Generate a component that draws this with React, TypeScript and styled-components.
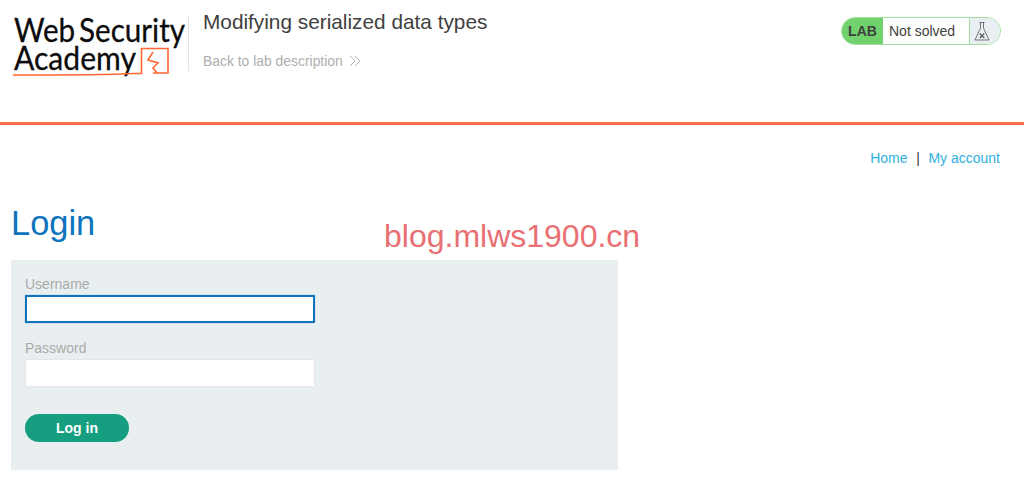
import styled, { createGlobalStyle } from 'styled-components';

const GlobalStyle = createGlobalStyle`
  html,
  body {
    margin: 0;
    padding: 0;
    background: #fff;
    font-family: 'Liberation Sans', Arial, sans-serif;
  }
`;

function Logo() {
  return (
    <LogoSvg viewBox='0 0 176 64' aria-label='Web Security Academy'>
      <LogoText x='2' y='27' textLength='171' lengthAdjust='spacingAndGlyphs'>
        Web Security
      </LogoText>
      <LogoText x='2' y='55' textLength='122' lengthAdjust='spacingAndGlyphs'>
        Academy
      </LogoText>
      <path d='M1 60C40 60 90 60 122 58.5H129.5V33.5H156V58H141' fill='none' stroke='#ff6633' strokeWidth='1.6' />
      <path d='M141 37L136 45L146 48L141 53L145 58' fill='none' stroke='#ff6633' strokeWidth='1.6' />
    </LogoSvg>
  );
}

function FlaskIcon() {
  return (
    <svg width='16' height='21' viewBox='0 0 16 21' fill='none' stroke='#555' strokeWidth='0.8'>
      <path d='M5.5 1.5H10.5M6.5 1.5V7L1 19H15L9.5 7V1.5' />
      <path d='M5.7 12.5L10.3 17M10.3 12.5L5.7 17' strokeWidth='1.1' />
    </svg>
  );
}

export default function App() {
  return (
    <Page>
      <GlobalStyle />
      <Header>
        <LogoLink href='#'>
          <Logo />
        </LogoLink>
        <TitleBlock>
          <Title>Modifying serialized data types</Title>
          <BackLink href='#'>
            Back to lab description
            <svg width='12' height='12' viewBox='0 0 12 12' fill='none' stroke='#b3b3b3' strokeWidth='1'>
              <path d='M1 1L6 6L1 11M6 1L11 6L6 11' />
            </svg>
          </BackLink>
        </TitleBlock>
        <StatusBadge>
          <LabTag>LAB</LabTag>
          <StatusText>Not solved</StatusText>
          <FlaskCell>
            <FlaskIcon />
          </FlaskCell>
        </StatusBadge>
      </Header>
      <Nav>
        <NavLink href='#'>Home</NavLink>
        <NavDivider>|</NavDivider>
        <NavLink href='#'>My account</NavLink>
      </Nav>
      <Main>
        <Heading>Login</Heading>
        <LoginForm onSubmit={(e) => e.preventDefault()}>
          <FieldLabel htmlFor='username'>Username</FieldLabel>
          <TextInput id='username' type='text' autoFocus />
          <FieldLabel htmlFor='password'>Password</FieldLabel>
          <TextInput id='password' type='password' />
          <SubmitButton type='submit'>Log in</SubmitButton>
        </LoginForm>
      </Main>
      <Watermark>blog.mlws1900.cn</Watermark>
    </Page>
  );
}

const Page = styled.div`
  position: relative;
  width: 1024px;
  height: 477px;
  overflow: hidden;
`;

const Header = styled.header`
  box-sizing: border-box;
  display: flex;
  align-items: flex-start;
  height: 125px;
  padding: 15px 23px 0 12px;
  border-bottom: 3px solid #f8704a;
`;

const LogoLink = styled.a`
  display: block;
  flex: none;
  width: 176px;
  height: 64px;
`;

const LogoSvg = styled.svg`
  display: block;
  width: 176px;
  height: 64px;
`;

const LogoText = styled.text`
  font-family: Lato, sans-serif;
  font-size: 33px;
  word-spacing: -4px;
  fill: #0b0b0b;
  stroke: #0b0b0b;
  stroke-width: 0.3px;
`;

const TitleBlock = styled.div`
  display: flex;
  flex-direction: column;
  align-items: flex-start;
  flex: 1;
  height: 56px;
  padding-left: 14px;
  border-left: 1px solid #e6e6e6;
`;

const Title = styled.h2`
  margin: -7px 0 0;
  font-size: 20.8px;
  line-height: 27px;
  font-weight: 400;
  color: #404040;
`;

const BackLink = styled.a`
  display: flex;
  align-items: center;
  gap: 6px;
  margin-top: 16px;
  font-size: 13.9px;
  line-height: 20px;
  color: #aeaeae;
  text-decoration: none;
`;

const StatusBadge = styled.div`
  box-sizing: border-box;
  display: flex;
  align-items: stretch;
  flex: none;
  width: 160px;
  height: 28px;
  margin-top: 2px;
  border: 1px solid #9ee09b;
  border-radius: 15px;
  overflow: hidden;
  background: #fff;
`;

const LabTag = styled.div`
  display: flex;
  align-items: center;
  justify-content: center;
  width: 41px;
  background: #70d16d;
  font-size: 14px;
  font-weight: 700;
  color: #404040;
`;

const StatusText = styled.div`
  display: flex;
  align-items: center;
  flex: 1;
  padding-left: 6px;
  font-size: 14px;
  color: #404040;
`;

const FlaskCell = styled.div`
  box-sizing: border-box;
  display: flex;
  align-items: center;
  width: 31px;
  padding-left: 4px;
  border-left: 1px solid #9ee09b;
  background: #e8eef1;
`;

const Nav = styled.nav`
  display: flex;
  justify-content: flex-end;
  align-items: center;
  gap: 8.6px;
  height: 20px;
  margin-top: 23px;
  padding-right: 24px;
  font-size: 14px;
`;

const NavLink = styled.a`
  color: #2fb0e0;
  text-decoration: none;
`;

const NavDivider = styled.span`
  color: #404040;
`;

const Main = styled.main`
  padding: 0 11px;
`;

const Heading = styled.h1`
  margin: 33px 0 0;
  font-size: 34.4px;
  line-height: 44px;
  font-weight: 400;
  color: #0d74bd;
`;

const LoginForm = styled.form`
  box-sizing: border-box;
  display: flex;
  flex-direction: column;
  align-items: flex-start;
  width: 607px;
  height: 210px;
  margin-top: 15px;
  padding: 16px 14px;
  background: #e9eff1;
`;

const FieldLabel = styled.label`
  font-size: 14px;
  line-height: 16px;
  color: #aaa;
`;

const TextInput = styled.input`
  box-sizing: border-box;
  display: block;
  width: 290px;
  height: 28px;
  margin: 3px 0 17px;
  padding: 0 8px;
  background: #fff;
  border: 1px solid #e6e6e6;
  border-radius: 1px;
  outline: none;

  &:focus {
    border: 2px solid #0d74bd;
    box-shadow: 0 0 1px #0d74bd;
  }
`;

const SubmitButton = styled.button`
  width: 104px;
  height: 28px;
  margin-top: 10px;
  padding: 0;
  border: none;
  border-radius: 14px;
  background: #159e80;
  font-family: inherit;
  font-size: 14px;
  font-weight: 700;
  color: #fff;
`;

const Watermark = styled.div`
  position: absolute;
  left: 384px;
  top: 218px;
  font-size: 32px;
  line-height: 36px;
  color: #e86f72;
`;
